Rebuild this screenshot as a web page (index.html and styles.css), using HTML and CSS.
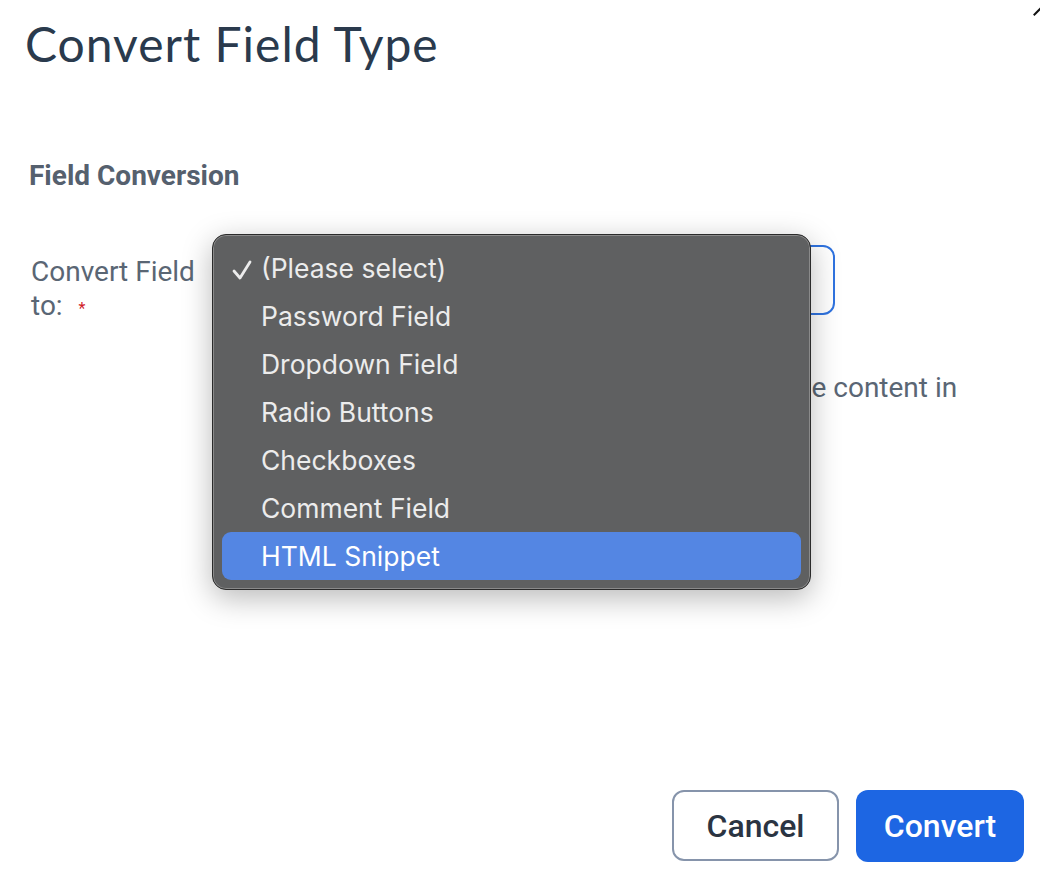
FILE: index.html
```html
<!DOCTYPE html>
<html>
  <head>
    <title>Convert Field Type</title>
    <meta name="viewport" content="width=device-width, initial-scale=1" />
    <link rel="stylesheet" href="styles.css">
  </head>
  <body>
    <div class="dialog">
      <div class="close-corner"></div>
      <h1 class="title">Convert Field Type</h1>

      <div class="form">
        <h2 class="section-title">Field Conversion</h2>

        <div class="row">
          <label class="row-label">Convert Field to: <span class="required">*</span></label>
          <div class="row-field">
            <div class="select-box">(Please select)</div>

            <ul class="menu">
              <li class="menu-item checked">
                <svg class="check" width="30" height="48" viewBox="0 0 30 48">
                  <polyline points="12,27 18,34 28,18" fill="none" stroke="#ececec" stroke-width="2.8" stroke-linecap="round" stroke-linejoin="round" />
                </svg>
                (Please select)
              </li>
              <li class="menu-item">Password Field</li>
              <li class="menu-item">Dropdown Field</li>
              <li class="menu-item">Radio Buttons</li>
              <li class="menu-item">Checkboxes</li>
              <li class="menu-item">Comment Field</li>
              <li class="menu-item active">HTML Snippet</li>
            </ul>

            <p class="help">Converting this field may change or remove the content in existing responses.</p>
          </div>
        </div>
      </div>

      <div class="actions">
        <button class="btn btn-cancel">Cancel</button>
        <button class="btn btn-primary">Convert</button>
      </div>
    </div>
  </body>
</html>
```

FILE: styles.css
```css
body {
  margin: 0;
  padding: 0;
  background: #fff;
  font-family: Roboto, "Liberation Sans", sans-serif;
  color: #55606e;
}

.dialog {
  position: relative;
  min-height: 880px;
  box-sizing: border-box;
  padding: 16px 16px 18px 25px;
  display: flex;
  flex-direction: column;
}

.close-corner {
  position: absolute;
  top: 10px;
  right: -4px;
  width: 12px;
  height: 2px;
  background: #111;
  transform: rotate(-45deg);
}

.title {
  margin: 0;
  font-family: Lato, "Noto Sans", sans-serif;
  font-weight: 400;
  font-size: 48px;
  line-height: 56px;
  letter-spacing: 1px;
  color: #2a3a4d;
}

.form {
  padding-left: 4px;
  margin-top: 88px;
}

.section-title {
  margin: 0;
  font-size: 28px;
  line-height: 32px;
  font-weight: 700;
  color: #55606e;
}

.row {
  display: grid;
  grid-template-columns: 203px 1fr;
  margin-top: 53px;
}

.row-label {
  max-width: 175px;
  padding: 10px 0 0 2px;
  font-size: 28px;
  line-height: 34px;
  color: #5a6674;
}

.required {
  position: relative;
  top: -1px;
  margin-left: 9px;
  color: #d0202a;
  font-size: 16px;
}

.row-field {
  position: relative;
  padding-right: 60px;
}

.select-box {
  box-sizing: border-box;
  width: 603px;
  height: 70px;
  border: 2px solid #2f73e0;
  border-radius: 12px;
  padding: 0 28px;
  font-size: 26px;
  line-height: 66px;
  color: #2a3442;
}

.help {
  margin: 56px 0 0 10px;
  font-size: 28px;
  line-height: 34px;
  color: #5a6674;
}

.menu {
  position: absolute;
  z-index: 2;
  top: -11px;
  left: -20px;
  width: 599px;
  box-sizing: border-box;
  margin: 0;
  padding: 9px;
  list-style: none;
  background: #5f6061;
  border: 1px solid #2b2b2b;
  border-radius: 14px;
  box-shadow: inset 0 0 0 1px #8a8a8a, 0 8px 30px rgba(0, 0, 0, 0.28);
  font-family: Inter, Roboto, sans-serif;
}

.menu-item {
  position: relative;
  height: 48px;
  padding-left: 39px;
  border-radius: 9px;
  font-size: 26.5px;
  line-height: 48px;
  color: #ececec;
}

.check {
  position: absolute;
  left: 0;
  top: 0;
}

.menu-item.active {
  background: #5486e3;
  color: #fff;
}

.actions {
  margin-top: auto;
  display: flex;
  justify-content: flex-end;
  gap: 17px;
}

.btn {
  height: 72px;
  padding: 0;
  border-radius: 12px;
  font-family: Roboto, sans-serif;
  font-size: 32px;
  font-weight: 500;
  cursor: pointer;
}

.btn-cancel {
  width: 167px;
  height: 71px;
  background: #fff;
  border: 2px solid #8694ab;
  color: #2b3442;
}

.btn-primary {
  width: 168px;
  background: #1d66e3;
  border: none;
  color: #fff;
}
```
